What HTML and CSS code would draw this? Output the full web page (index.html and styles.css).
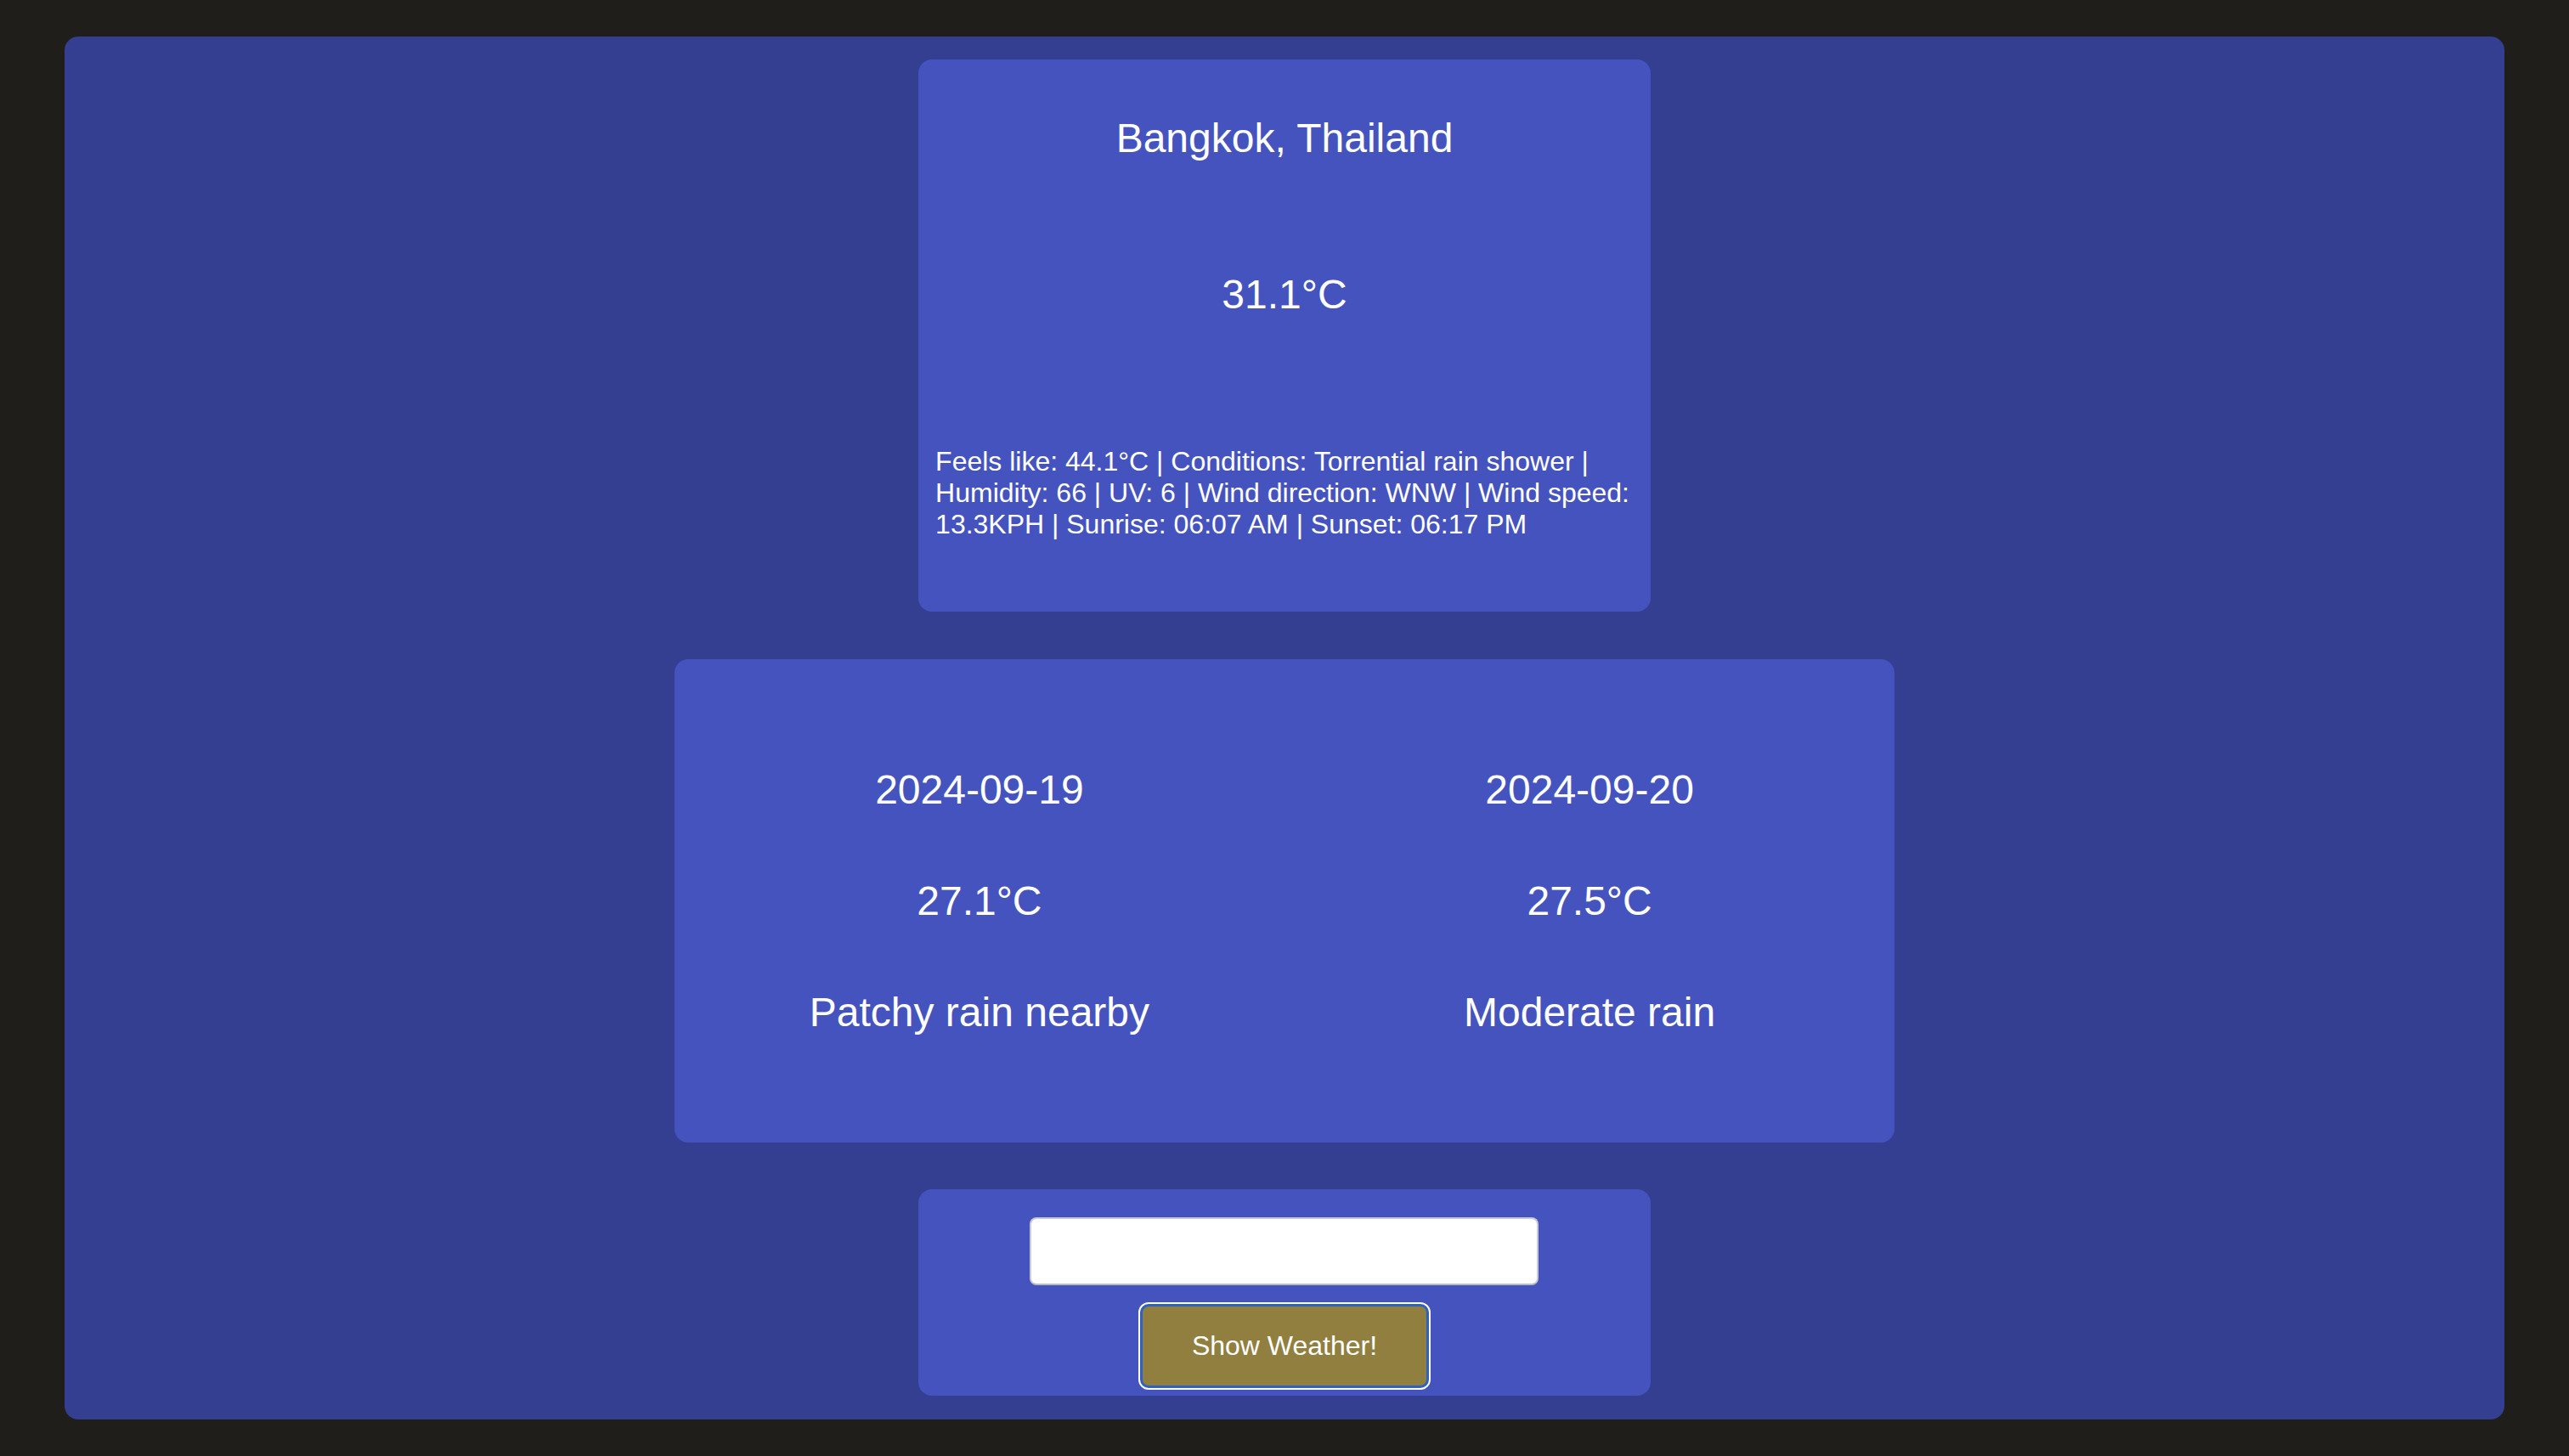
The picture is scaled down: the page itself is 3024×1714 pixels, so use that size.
FILE: index.html
```html
<!DOCTYPE html>
<html lang="en">
<head>
<meta charset="utf-8">
<title>Weather</title>
<link rel="stylesheet" href="styles.css">
</head>
<body>
<main class="app">
  <section class="card current">
    <h1 class="city">Bangkok, Thailand</h1>
    <p class="temp">31.1°C</p>
    <p class="details">Feels like: 44.1°C | Conditions: Torrential rain shower | Humidity: 66 | UV: 6 | Wind direction: WNW | Wind speed: 13.3KPH | Sunrise: 06:07 AM | Sunset: 06:17 PM</p>
  </section>
  <section class="card forecast">
    <div class="day">
      <p class="big">2024-09-19</p>
      <p class="big">27.1°C</p>
      <p class="big">Patchy rain nearby</p>
    </div>
    <div class="day">
      <p class="big">2024-09-20</p>
      <p class="big">27.5°C</p>
      <p class="big">Moderate rain</p>
    </div>
  </section>
  <section class="card search">
    <input class="city-input" type="text" aria-label="City">
    <button class="show-btn" type="button">Show Weather!</button>
  </section>
</main>
</body>
</html>
```
FILE: styles.css
```css
* {
  box-sizing: border-box;
}

html, body {
  margin: 0;
  padding: 0;
}

body {
  background: #1f1e1a;
  height: 100vh;
  display: flex;
  align-items: center;
  justify-content: center;
  font-family: "Liberation Sans", Arial, sans-serif;
  color: #ffffff;
}

.app {
  width: 95vw;
  height: 95vh;
  background: #343f91;
  border-radius: 16px;
  display: flex;
  flex-direction: column;
  align-items: center;
  padding-top: 27px;
}

.card {
  background: #4553bf;
  border-radius: 16px;
}

.current {
  width: 30%;
  padding: 20px;
  margin-bottom: 56px;
  display: flex;
  flex-direction: column;
}

.city {
  font-size: 48px;
  font-weight: normal;
  line-height: normal;
  text-align: center;
  margin: 45px 0 0;
}

.temp {
  font-size: 48px;
  line-height: normal;
  text-align: center;
  margin: 129px 0 0;
}

.details {
  font-size: 32px;
  line-height: normal;
  margin: 151.5px 0 64px;
}

.forecast {
  width: 50%;
  display: grid;
  grid-template-columns: 1fr 1fr;
  margin-bottom: 54.5px;
}

.day {
  display: flex;
  flex-direction: column;
  align-items: center;
  gap: 76px;
  padding: 126px 0;
}

.big {
  font-size: 48px;
  line-height: normal;
  margin: 0;
  text-align: center;
}

.search {
  width: 30%;
  padding: 33px 0 9px;
  display: flex;
  flex-direction: column;
  align-items: center;
}

.city-input {
  width: 599px;
  height: 80px;
  background: #ffffff;
  border: 2px solid #c9cad6;
  border-bottom-color: #b9bac2;
  border-radius: 8px;
  margin: 0 0 22px;
  font-size: 32px;
  font-family: "Liberation Sans", Arial, sans-serif;
}

.show-btn {
  width: 340px;
  height: 99px;
  background: #917f40;
  color: #ffffff;
  border: 3px solid #2f62c0;
  outline: 2px solid #ffffff;
  border-radius: 10px;
  font-size: 32px;
  font-family: "Liberation Sans", Arial, sans-serif;
  padding: 0;
}
```
